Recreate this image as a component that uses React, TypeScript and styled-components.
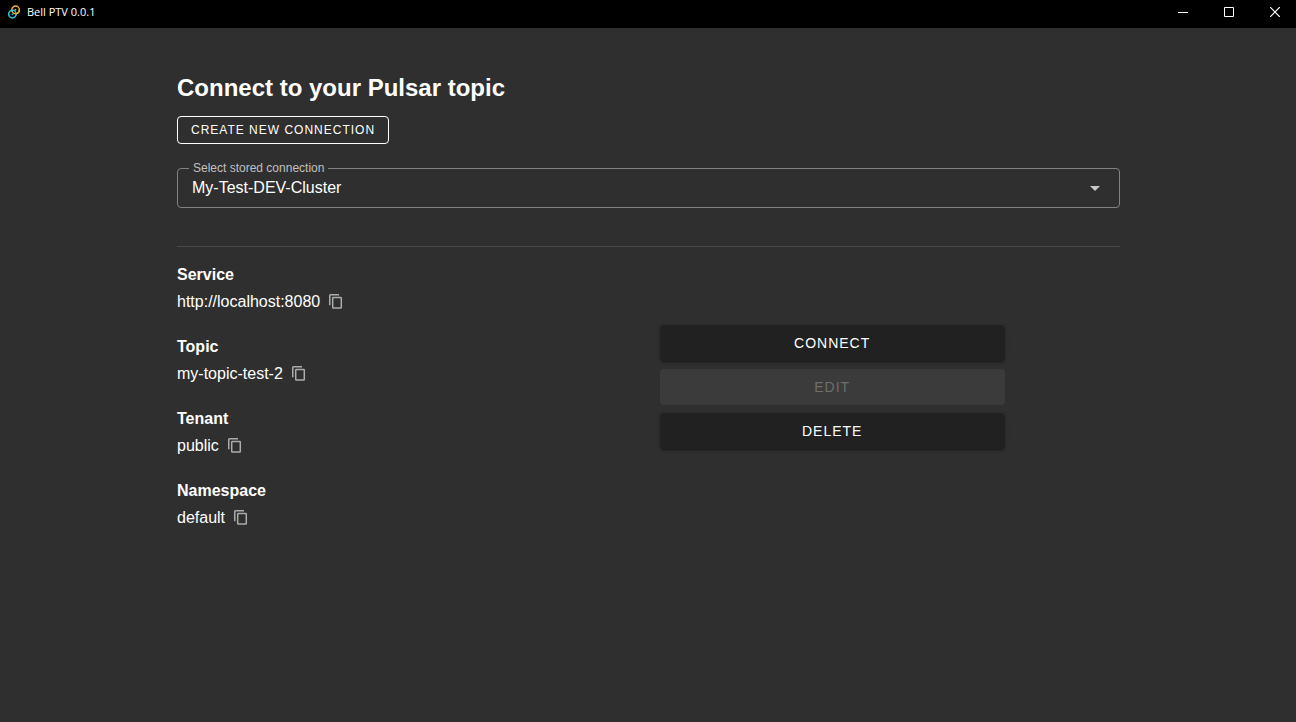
import React from "react";
import styled, { createGlobalStyle } from "styled-components";

const GlobalStyle = createGlobalStyle`
  *, *::before, *::after { box-sizing: border-box; }
  body {
    margin: 0;
    background: #2f2f2f;
    color: #ffffff;
    font-family: "Liberation Sans", Arial, sans-serif;
    font-size: 16px;
    line-height: 24px;
  }
  h1, h2, p, dl, dt, dd { margin: 0; }
`;

const TitleBar = styled.header`
  display: flex;
  align-items: center;
  height: 28px;
  padding-left: 7px;
  background: #000000;
`;

const AppName = styled.span`
  flex: 1;
  padding: 0 0 4px 6px;
  font-family: "Segoe UI", "Open Sans", "Noto Sans", sans-serif;
  font-size: 11px;
  line-height: 16px;
`;

const Logo = styled.svg`
  width: 14px;
  height: 14px;
  margin-bottom: 4px;
`;

const WindowControls = styled.div`
  display: flex;
  gap: 4px;
`;

const WindowButton = styled.button`
  display: flex;
  align-items: center;
  justify-content: center;
  width: 42px;
  height: 28px;
  padding: 0 0 4px;
  border: 0;
  background: transparent;
  color: #ffffff;
`;

const Page = styled.main`
  padding: 44px 176px 24px 177px;
`;

const Title = styled.h1`
  font-size: 24px;
  line-height: 32px;
`;

const OutlinedButton = styled.button`
  display: block;
  height: 28px;
  margin-top: 12px;
  padding: 0 13px;
  border: 1px solid #ffffff;
  border-radius: 4px;
  background: transparent;
  color: #ffffff;
  font: 500 12px/24px "Liberation Sans", Arial, sans-serif;
  letter-spacing: 1px;
  text-transform: uppercase;
`;

const SelectOutline = styled.fieldset`
  position: relative;
  display: block;
  height: 48px;
  margin: 16px 0 0;
  padding: 0;
  border: 1px solid #828282;
  border-radius: 4px;
  min-width: 0;
`;

const SelectLegend = styled.legend`
  margin-left: 11px;
  padding: 0 4px;
  color: #c0c0c0;
  font-size: 12px;
  line-height: 16px;
`;

const ConnectionSelect = styled.select`
  display: block;
  width: 100%;
  height: 24px;
  padding: 0 48px 0 14px;
  border: 0;
  appearance: none;
  background: transparent;
  color: #ffffff;
  font: 16px/24px "Liberation Sans", Arial, sans-serif;
`;

const SelectArrow = styled.svg`
  position: absolute;
  top: 0;
  right: 12px;
  width: 24px;
  height: 24px;
  fill: #c7c7c7;
  pointer-events: none;
`;

const Divider = styled.hr`
  height: 1px;
  margin: 38px 0 16px;
  border: 0;
  background: #494949;
`;

const Columns = styled.div`
  display: grid;
  grid-template-columns: 1fr 1fr;
  column-gap: 22px;
`;

const Details = styled.dl`
  display: flex;
  flex-direction: column;
  gap: 18px;
`;

const DetailName = styled.dt`
  font-weight: 700;
  line-height: 24px;
`;

const DetailValue = styled.dd`
  display: flex;
  align-items: center;
  gap: 8px;
  height: 30px;
`;

const CopyButton = styled.button`
  display: flex;
  padding: 0;
  border: 0;
  background: transparent;
  color: #acacac;
`;

const Actions = styled.div`
  display: flex;
  flex-direction: column;
  gap: 8px;
  width: 75%;
  padding-top: 62px;
`;

const ActionButton = styled.button`
  height: 36px;
  border: 0;
  border-radius: 4px;
  background: #212121;
  color: #ffffff;
  font: 500 14px/24px "Liberation Sans", Arial, sans-serif;
  letter-spacing: 1px;
  text-transform: uppercase;
  box-shadow: 0 3px 1px -2px rgba(0, 0, 0, 0.2), 0 2px 2px rgba(0, 0, 0, 0.14),
    0 1px 5px rgba(0, 0, 0, 0.12);

  &:disabled {
    background: #3b3b3b;
    color: #6e6e6e;
    box-shadow: none;
  }
`;

const details = [
  { name: "Service", value: "http://localhost:8080" },
  { name: "Topic", value: "my-topic-test-2" },
  { name: "Tenant", value: "public" },
  { name: "Namespace", value: "default" },
];

function CopyIcon() {
  return (
    <svg
      width="16"
      height="16"
      viewBox="0 0 16 16"
      fill="none"
      stroke="currentColor"
      strokeWidth="1.5"
      aria-hidden="true"
    >
      <path d="M1.75 11.3V1.6Q1.75 .75 2.6 .75H11" />
      <rect x="4.7" y="3.6" width="8.6" height="10.4" rx="0.6" />
    </svg>
  );
}

export default function App() {
  return (
    <>
      <GlobalStyle />
      <TitleBar>
        <Logo viewBox="0 0 14 14" fill="none" aria-hidden="true">
          <circle cx="8.6" cy="4.9" r="3.8" stroke="#f5b12e" strokeWidth="1.5" />
          <circle cx="5.4" cy="9.1" r="3.8" stroke="#24c8db" strokeWidth="1.5" />
          <path d="M8.6 8.7A3.8 3.8 0 0 0 12.4 4.9" stroke="#f5b12e" strokeWidth="1.5" />
          <circle cx="8.5" cy="4.7" r="0.9" fill="#f5b12e" />
          <circle cx="5.5" cy="9.3" r="0.9" fill="#24c8db" />
        </Logo>
        <AppName>Bell PTV 0.0.1</AppName>
        <WindowControls>
          <WindowButton aria-label="Minimize">
            <svg width="10" height="10" viewBox="0 0 10 10" stroke="currentColor" fill="none">
              <path d="M0 5.5h10" />
            </svg>
          </WindowButton>
          <WindowButton aria-label="Maximize">
            <svg width="10" height="10" viewBox="0 0 10 10" stroke="currentColor" fill="none">
              <path d="M.5 .5h9v9h-9z" />
            </svg>
          </WindowButton>
          <WindowButton aria-label="Close">
            <svg width="10" height="10" viewBox="0 0 10 10" stroke="currentColor" fill="none">
              <path d="M0 0l10 10M10 0L0 10" strokeWidth="1.2" />
            </svg>
          </WindowButton>
        </WindowControls>
      </TitleBar>
      <Page>
        <Title>Connect to your Pulsar topic</Title>
        <OutlinedButton type="button">Create new connection</OutlinedButton>
        <SelectOutline>
          <SelectLegend>
            <label htmlFor="connection">Select stored connection</label>
          </SelectLegend>
          <ConnectionSelect id="connection" defaultValue="My-Test-DEV-Cluster">
            <option>My-Test-DEV-Cluster</option>
          </ConnectionSelect>
          <SelectArrow viewBox="0 0 24 24" aria-hidden="true">
            <path d="M7 10l5 5 5-5z" />
          </SelectArrow>
        </SelectOutline>
        <Divider />
        <Columns>
          <Details>
            {details.map(({ name, value }) => (
              <div key={name}>
                <DetailName>{name}</DetailName>
                <DetailValue>
                  {value}
                  <CopyButton type="button" aria-label={`Copy ${name}`}>
                    <CopyIcon />
                  </CopyButton>
                </DetailValue>
              </div>
            ))}
          </Details>
          <Actions>
            <ActionButton type="button">Connect</ActionButton>
            <ActionButton type="button" disabled>
              Edit
            </ActionButton>
            <ActionButton type="button">Delete</ActionButton>
          </Actions>
        </Columns>
      </Page>
    </>
  );
}
